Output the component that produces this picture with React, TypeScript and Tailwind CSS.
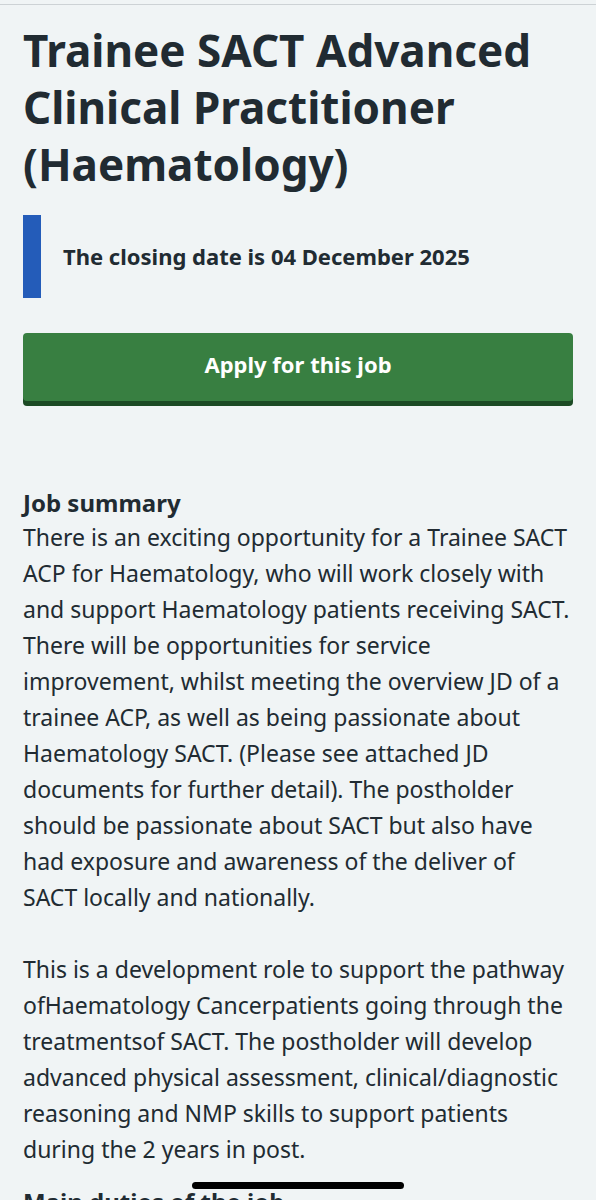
export default function App() {
  return (
    <div
      className="min-h-[1200px] bg-[#f0f4f5] text-[#212b32]"
      style={{ fontFamily: "'Noto Sans', Lato, sans-serif" }}
    >
      <div className="h-[4px]" />
      <div className="h-px bg-[#cdd2d5]" />

      <main className="px-[23px] pt-[17px]">
        <h1 className="text-[44px] font-bold leading-[57px]">
          Trainee SACT Advanced
          <br />
          Clinical Practitioner
          <br />
          (Haematology)
        </h1>

        <div className="mt-[22px] flex h-[83px] items-center border-l-[18px] border-[#245cb9] pl-[22px]">
          <p className="text-[22px] font-bold">The closing date is 04 December 2025</p>
        </div>

        <button className="mt-[35px] h-[68px] w-full rounded-[4px] bg-[#387f41] pb-[5px] text-[22px] font-bold text-white shadow-[0_5px_0_#1c4a24]">
          Apply for this job
        </button>

        <section className="mt-[86px]">
          <h2 className="text-[24px] font-bold leading-[32px]">Job summary</h2>
          <p className="text-[23px] leading-[36px]">
            There is an exciting opportunity for a Trainee SACT
            <br />
            ACP for Haematology, who will work closely with
            <br />
            and support Haematology patients receiving SACT.
            <br />
            There will be opportunities for service
            <br />
            improvement, whilst meeting the overview JD of a
            <br />
            trainee ACP, as well as being passionate about
            <br />
            Haematology SACT. (Please see attached JD
            <br />
            documents for further detail). The postholder
            <br />
            should be passionate about SACT but also have
            <br />
            had exposure and awareness of the deliver of
            <br />
            SACT locally and nationally.
          </p>
          <p className="mt-[36px] text-[23px] leading-[36px]">
            This is a development role to support the pathway
            <br />
            ofHaematology Cancerpatients going through the
            <br />
            treatmentsof SACT. The postholder will develop
            <br />
            advanced physical assessment, clinical/diagnostic
            <br />
            reasoning and NMP skills to support patients
            <br />
            during the 2 years in post.
          </p>
        </section>

        <h2 className="mt-[19px] text-[24px] font-bold leading-[32px]">Main duties of the job</h2>
      </main>

      <div className="fixed left-[192px] top-[1182px] h-[7px] w-[212px] rounded-full bg-black" />
    </div>
  );
}
